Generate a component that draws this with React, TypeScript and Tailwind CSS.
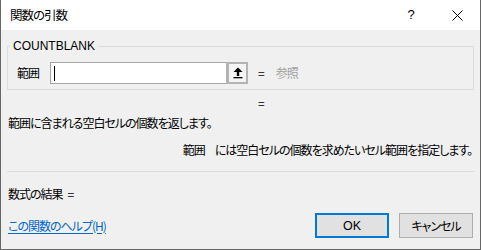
import { useState } from 'react';

const FONT = "font-['Noto_Sans_CJK_JP','Noto_Sans',sans-serif] [font-feature-settings:'palt']";

function RefButton() {
  return (
    <div className="w-[22px] h-[22px] bg-[#b4b4b4] pl-[3px] pt-[2px] pr-[2px] pb-[2px]">
      <div className="w-full h-full bg-[#f4f4f4] flex items-center justify-center">
        <svg width="10" height="12" viewBox="0 0 10 12">
          <polygon points="5,0.5 9.5,5 0.5,5" fill="#000" />
          <rect x="3.8" y="4.5" width="2.4" height="4.5" fill="#000" />
          <rect x="0.5" y="10" width="9" height="1.3" fill="#000" />
        </svg>
      </div>
    </div>
  );
}

export default function App() {
  const [value, setValue] = useState('');

  return (
    <div className={`w-[481px] h-[250px] flex flex-col bg-[#f0f0f0] border-x border-b border-[#666666] text-[12px] leading-[16px] tracking-[-1px] text-black ${FONT}`}>
      {/* title bar */}
      <div className="h-[30px] bg-white flex items-center shrink-0">
        <span className="pl-[9px] text-[12.5px]">関数の引数</span>
        <div className="ml-auto flex h-full">
          <div className="w-[46px] flex items-center justify-center text-[13px] tracking-normal font-['Liberation_Sans',sans-serif]">?</div>
          <div className="w-[46px] flex items-center justify-center">
            <svg width="11" height="11" viewBox="0 0 11 11">
              <path d="M0.5 0.5 L10.5 10.5 M10.5 0.5 L0.5 10.5" stroke="#000" strokeWidth="1" />
            </svg>
          </div>
        </div>
      </div>

      <div className="flex-1 flex flex-col px-[6px]">
        <fieldset className="mt-[8px] border border-[#dcdcdc] px-0 pt-[8px] pb-[5px] min-w-0">
          <legend className="ml-[2px] px-[3px] font-['Liberation_Sans',sans-serif] tracking-normal text-[12px] leading-[16px]">COUNTBLANK</legend>
          <div className="flex items-center h-[22px] pl-[9px]">
            <span className="w-[24px]">範囲</span>
            <div className="ml-[9px] flex h-[22px]">
              <div className="relative w-[176px] h-[22px] bg-white border border-r-0 border-[#a6a6a6] flex items-center pl-[3px]">
                <input
                  value={value}
                  onChange={e => setValue(e.target.value)}
                  className="w-full outline-none bg-transparent text-[12px]"
                />
                {value === '' && <div className="absolute left-[3px] w-px h-[15px] bg-black" />}
              </div>
              <RefButton />
            </div>
            <span className="ml-[10px]">=</span>
            <span className="ml-[12px] text-[#a0a0a0]">参照</span>
          </div>
        </fieldset>

        <div className="mt-[5px] pl-[251px]">=</div>
        <div className="mt-[4px] pl-[1px]">範囲に含まれる空白セルの個数を返します。</div>
        <div className="mt-[11px] flex justify-end gap-[10px] pr-[2px]">
          <span>範囲</span>
          <span>には空白セルの個数を求めたいセル範囲を指定します。</span>
        </div>
        <div className="mt-[13px] h-px bg-[#dcdcdc]" />
        <div className="mt-[14px] pl-[1px] flex">
          <span>数式の結果</span>
          <span className="ml-[5px]">=</span>
        </div>
        <div className="mt-[11px] flex items-center">
          <a href="#" className="pl-[1px] text-[#0066cc] underline underline-offset-2">この関数のヘルプ(H)</a>
          <div className="ml-auto flex gap-[10px] pr-[1px]">
            <button className="w-[74px] h-[25px] bg-[#e1e1e1] border-2 border-[#0078d7] font-['Liberation_Sans',sans-serif] tracking-normal text-[12.5px]">OK</button>
            <button className="w-[74px] h-[25px] bg-[#e1e1e1] border border-[#adadad]">キャンセル</button>
          </div>
        </div>
      </div>
    </div>
  );
}
